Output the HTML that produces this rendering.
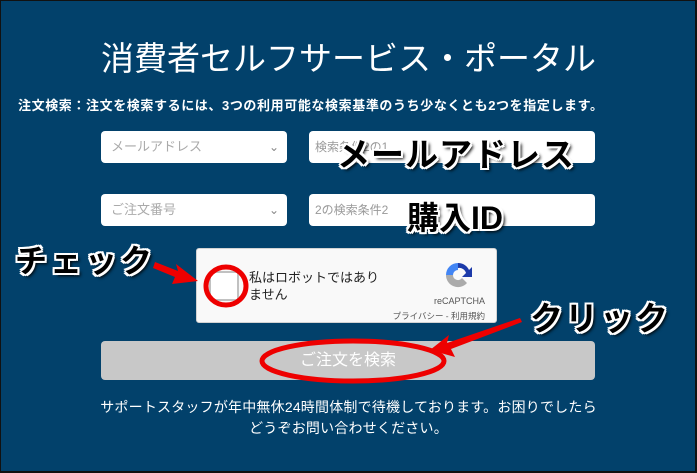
<!DOCTYPE html>
<html><head><meta charset="utf-8"><style>
body{margin:0;width:697px;height:473px;overflow:hidden;background:#02416b;font-family:"Liberation Sans","Noto Sans CJK JP",sans-serif;position:relative;}
.frame{position:absolute;inset:0;border:1px solid #111;border-right:2px solid #111;border-bottom:2px solid #111;}
.a{position:absolute;}
.title{left:0;width:697px;top:32px;text-align:center;color:#fff;font-size:33px;}
.sub{left:18px;top:95px;color:#fff;font-size:13px;font-weight:bold;letter-spacing:0.6px;}
.inp{background:#fff;border-radius:4px;height:32px;color:#999;font-size:13px;line-height:32px;box-sizing:border-box;padding-left:10px;}
.chev{position:absolute;right:8px;top:0;color:#888;font-size:12px;}
.ann{font-weight:bold;color:#000;text-shadow:-2px -2px 0 #fff,2px -2px 0 #fff,-2px 2px 0 #fff,2px 2px 0 #fff,0 2px 0 #fff,0 -2px 0 #fff,2px 0 0 #fff,-2px 0 0 #fff,3px 3px 3px #000;white-space:nowrap;}
</style></head><body>
<div class="a title">消費者セルフサービス・ポータル</div>
<div class="a sub">注文検索：注文を検索するには、3つの利用可能な検索基準のうち少なくとも2つを指定します。</div>
<div class="a inp" style="left:101px;top:131px;width:186px;color:#aaa">メールアドレス<span class="chev">&#8964;</span></div>
<div class="a inp" style="left:309px;top:131px;width:286px;font-size:12px;padding-left:6px">検索条件2の1</div>
<div class="a inp" style="left:101px;top:194px;width:186px;color:#aaa">ご注文番号<span class="chev">&#8964;</span></div>
<div class="a inp" style="left:309px;top:194px;width:286px;font-size:12px;padding-left:6px">2の検索条件2</div>
<div class="a" style="left:196px;top:248px;width:301px;height:75px;background:#f9f9f9;border:1px solid #d3d3d3;box-sizing:border-box;border-radius:3px">
 <div class="a" style="left:12px;top:22px;width:26px;height:26px;background:#fff;border:2px solid #c1c1c1;border-radius:2px"></div>
 <div class="a" style="left:52px;top:20px;font-size:13px;color:#222;line-height:17px">私はロボットではあり<br>ません</div>
 <svg class="a" style="left:245px;top:10px" width="32" height="32" viewBox="0 0 32 32"><path d="M16 4a12 12 0 0 1 11 7l3-3v10H20l4-4a7 7 0 0 0-8-5z" fill="#1c3aa9"/><path d="M4 16A12 12 0 0 1 16 4v7a5 5 0 0 0-5 5z" fill="#4285f4"/><path d="M4 16h7a5 5 0 0 0 9 3l5 5A12 12 0 0 1 4 16z" fill="#ababab"/></svg>
 <div class="a" style="right:11px;top:47px;font-size:9px;color:#555">reCAPTCHA</div>
 <div class="a" style="right:11px;top:61px;font-size:8.5px;color:#555">プライバシー - 利用規約</div>
</div>
<div class="a" style="left:101px;top:341px;width:494px;height:39px;background:#c8c8c8;border-radius:4px;color:#fff;font-size:16px;text-align:center;line-height:39px">ご注文を検索</div>
<div class="a" style="left:0;width:697px;top:397px;text-align:center;color:#fff;font-size:14px;line-height:21px;letter-spacing:0.2px">サポートスタッフが年中無休24時間体制で待機しております。お困りでしたら<br>どうぞお問い合わせください。</div>
<svg class="a" style="left:0;top:0" width="697" height="473">
 <ellipse cx="226" cy="286" rx="20" ry="19" fill="none" stroke="#e00" stroke-width="5"/>
 <ellipse cx="353" cy="361" rx="91" ry="20" fill="none" stroke="#e00" stroke-width="5"/>
 <polygon points="155,262 178,271 176,264 198,281 172,284 175,277 153,268" fill="#e00"/>
 <polygon points="520,318 447,343 449,335 430,350 455,357 451,349 522,322" fill="#e00"/>
</svg>
<div class="a ann" style="left:15px;top:236px;font-size:32px;letter-spacing:3px">チェック</div>
<div class="a ann" style="left:337px;top:128px;font-size:33px;letter-spacing:1px">メールアドレス</div>
<div class="a ann" style="left:407px;top:193px;font-size:32px">購入ID</div>
<div class="a ann" style="left:530px;top:292px;font-size:33px;letter-spacing:2px">クリック</div>
<div class="frame"></div>
</body></html>
